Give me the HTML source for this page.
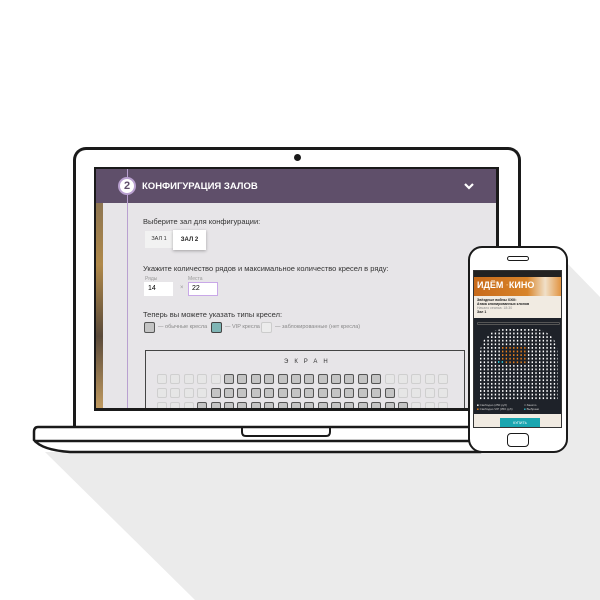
<!DOCTYPE html>
<html><head><meta charset="utf-8"><style>
*{margin:0;padding:0;box-sizing:border-box}
body{width:600px;height:600px;background:#fff;position:relative;overflow:hidden;font-family:"Liberation Sans",sans-serif}
.a{position:absolute}
.row{position:absolute;left:157px;display:flex;gap:3.4px}
.row div{width:10px;height:10px;border-radius:2px;border:1px solid #cfcfcf;background:#e6e6e6}
.row div.d{border:1px solid #555;background:#c4c4c4}
.t{font-size:7.5px;color:#333}
.dots{background-image:linear-gradient(90deg,transparent 1.6px,#1e2229 1.6px),linear-gradient(transparent 1.6px,#1e2229 1.6px);background-size:3.7px 3.6px}
</style></head><body>
<svg class="a" style="left:0;top:0" width="600" height="600">
<polygon points="45,452 470,452 470,263 567,263 600,297 600,600 195,600" fill="#ebebeb"/>
</svg>
<div class="a" style="left:73px;top:147px;width:448px;height:285px;border:3px solid #1a1a1a;border-bottom:none;border-radius:13px 13px 0 0;background:#fff"></div>
<div class="a" style="left:294px;top:154px;width:7px;height:7px;border-radius:50%;background:#1a1a1a"></div>
<div class="a" style="left:94px;top:167px;width:405px;height:244px;background:#1a1a1a"></div>
<div class="a" style="left:96px;top:169px;width:400px;height:239px;background:#e7e5e8;overflow:hidden">
 <div class="a" style="left:0;top:0;width:7px;height:239px;background:linear-gradient(#7a6a55,#b0894a 40%,#5a4a3a 70%,#c09a60)"></div>
 <div class="a" style="left:0;top:0;width:400px;height:34px;background:#5f4f6a"></div>
 <div class="a" style="left:31px;top:0;width:1px;height:239px;background:#b9a0d0"></div>
 <div class="a" style="left:22px;top:8px;width:18px;height:18px;border-radius:50%;background:#fff;border:2px solid #b9a0d0;color:#5f4f6a;font-weight:bold;font-size:11px;text-align:center;line-height:14px">2</div>
 <div class="a" style="left:46px;top:12px;color:#fff;font-weight:bold;font-size:9.5px">КОНФИГУРАЦИЯ ЗАЛОВ</div>
 <svg class="a" style="left:368px;top:13px" width="10" height="8"><path d="M1 2 L5 6 L9 2" stroke="#fff" stroke-width="2.2" fill="none"/></svg>
 <div class="a t" style="left:47px;top:48px">Выберите зал для конфигурации:</div>
 <div class="a" style="left:49px;top:62px;width:28px;height:17px;background:#f2f2f2;font-size:5.5px;color:#333;text-align:center;line-height:17px">ЗАЛ 1</div>
 <div class="a" style="left:77px;top:61px;width:33px;height:20px;background:#fff;box-shadow:0 1px 3px rgba(0,0,0,.3);font-size:6px;font-weight:bold;color:#222;text-align:center;line-height:20px">ЗАЛ 2</div>
 <div class="a t" style="left:47px;top:95px">Укажите количество рядов и максимальное количество кресел в ряду:</div>
 <div class="a" style="left:49px;top:107px;font-size:5px;color:#999">Ряды</div>
 <div class="a" style="left:92px;top:107px;font-size:5px;color:#999">Места</div>
 <div class="a" style="left:48px;top:113px;width:29px;height:14px;background:#fff;font-size:7px;padding:3px 4px">14</div>
 <div class="a" style="left:84px;top:116px;font-size:6px;color:#999">×</div>
 <div class="a" style="left:92px;top:113px;width:30px;height:14px;background:#fff;border:1px solid #c9a8e8;font-size:7px;padding:2px 3px">22</div>
 <div class="a t" style="left:47px;top:141px">Теперь вы можете указать типы кресел:</div>
 <div class="a" style="left:48px;top:153px;width:11px;height:11px;border:1.5px solid #555;background:#c4c4c4;border-radius:2px"></div>
 <div class="a" style="left:62px;top:155px;font-size:5.5px;color:#888">— обычные кресла</div>
 <div class="a" style="left:115px;top:153px;width:11px;height:11px;border:1.5px solid #444;background:#7fb5b5;border-radius:2px"></div>
 <div class="a" style="left:129px;top:155px;font-size:5.5px;color:#888">— VIP кресла</div>
 <div class="a" style="left:165px;top:153px;width:11px;height:11px;border:1px solid #ccc;background:#ececec;border-radius:2px"></div>
 <div class="a" style="left:179px;top:155px;font-size:5.5px;color:#888">— заблокированные (нет кресла)</div>
 <div class="a" style="left:49px;top:181px;width:320px;height:70px;border:1px solid #444"></div>
 <div class="a" style="left:188px;top:190px;font-size:6px;color:#333;letter-spacing:6px">ЭКРАН</div>
</div>
<div class="a" style="left:0;top:0;width:496px;height:408px;overflow:hidden">
<div class="row" style="top:374px"><div></div><div></div><div></div><div></div><div></div><div class="d"></div><div class="d"></div><div class="d"></div><div class="d"></div><div class="d"></div><div class="d"></div><div class="d"></div><div class="d"></div><div class="d"></div><div class="d"></div><div class="d"></div><div class="d"></div><div></div><div></div><div></div><div></div><div></div></div>
<div class="row" style="top:388px"><div></div><div></div><div></div><div></div><div class="d"></div><div class="d"></div><div class="d"></div><div class="d"></div><div class="d"></div><div class="d"></div><div class="d"></div><div class="d"></div><div class="d"></div><div class="d"></div><div class="d"></div><div class="d"></div><div class="d"></div><div class="d"></div><div></div><div></div><div></div><div></div></div>
<div class="row" style="top:402px"><div></div><div></div><div></div><div class="d"></div><div class="d"></div><div class="d"></div><div class="d"></div><div class="d"></div><div class="d"></div><div class="d"></div><div class="d"></div><div class="d"></div><div class="d"></div><div class="d"></div><div class="d"></div><div class="d"></div><div class="d"></div><div class="d"></div><div class="d"></div><div></div><div></div><div></div></div>
</div>
<svg class="a" style="left:0;top:0" width="600" height="600">
<path d="M38 427 H480 V452 H70 Q42 450 34 440 V432 Q34 427 38 427 Z" fill="#fff" stroke="#1a1a1a" stroke-width="2.5"/>
<line x1="34" y1="441" x2="480" y2="441" stroke="#1a1a1a" stroke-width="2.5"/>
<path d="M242 428 V432 Q242 436 246 436 H326 Q330 436 330 432 V428" fill="none" stroke="#1a1a1a" stroke-width="2"/>
</svg>
<div class="a" style="left:468px;top:246px;width:100px;height:207px;border:2px solid #1a1a1a;border-radius:14px;background:#fff"></div>
<div class="a" style="left:507px;top:256px;width:22px;height:5px;border:1.5px solid #1a1a1a;border-radius:3px"></div>
<div class="a" style="left:507px;top:433px;width:22px;height:14px;border:1.5px solid #1a1a1a;border-radius:4px"></div>
<div class="a" style="left:473px;top:270px;width:89px;height:158px;background:#1e2229;border:1px solid #333;overflow:hidden">
 <div class="a" style="left:0;top:0;width:89px;height:6px;background:#222"></div>
 <div class="a" style="left:0;top:6px;width:89px;height:19px;background:linear-gradient(90deg,#c86a1a,#d8842a 60%,#f0e0c8 80%,#e08a30)"></div>
 <div class="a" style="left:3px;top:9px;color:#fff;font-weight:bold;font-size:9px">ИДЁМ <span style="color:#f5b060">·</span>КИНО</div>
 <div class="a" style="left:0;top:25px;width:89px;height:22px;background:#f1ebe2"></div>
 <div class="a" style="left:3px;top:27px;font-size:3.5px;font-weight:bold;color:#222;line-height:4px">Звёздные войны XXIII:<br>Атака клонированных клонов<br><span style="font-weight:normal;color:#888">Начало сеанса: 18:30</span><br>Зал 1</div>
 <div class="a" style="left:3px;top:51px;width:83px;height:3px;border:1px solid #555;border-radius:1px"></div>
 <div class="a dots" style="left:6px;top:58px;width:78px;height:71px;border-radius:24px 24px 0 0;background-color:#fff"></div>
 <div class="a dots" style="left:28px;top:76px;width:26px;height:18px;background-color:#e8801e"></div>
 <div class="a dots" style="left:24px;top:90px;width:6px;height:4px;background-color:#28b8c8"></div>
 <div class="a" style="left:3px;top:132px;font-size:3px;color:#ccc;line-height:4px"><span style="color:#fff">■</span> Свободно (250 руб)<br><span style="color:#e8801e">■</span> Свободно VIP (350 руб)</div>
 <div class="a" style="left:50px;top:132px;font-size:3px;color:#ccc;line-height:4px">□ Занято<br><span style="color:#28b8c8">■</span> Выбрано</div>
 <div class="a" style="left:0;top:143px;width:89px;height:15px;background:#f1ebe2"></div>
 <div class="a" style="left:26px;top:147px;width:40px;height:11px;background:#1aa6b0;color:#fff;font-size:3.5px;text-align:center;line-height:11px">КУПИТЬ</div>
</div>
</body></html>
